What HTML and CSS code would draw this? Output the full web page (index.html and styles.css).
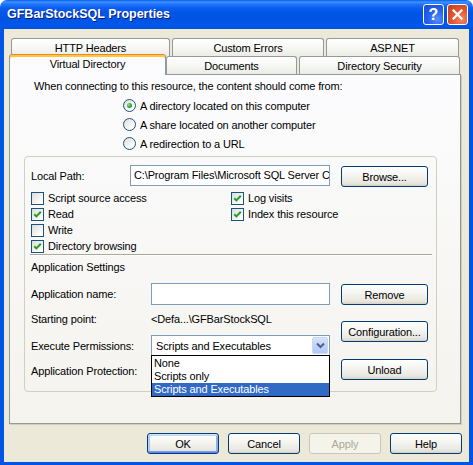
FILE: index.html
```html
<!DOCTYPE html>
<html>
<head>
<meta charset="utf-8">
<title>GFBarStockSQL Properties</title>
<link rel="stylesheet" href="styles.css">
</head>
<body>
<div class="window">
  <div class="titlebar">
    <span class="title">GFBarStockSQL Properties</span>
    <div class="tbtns">
      <span class="tbtn help">?</span>
      <span class="tbtn close"><svg width="11" height="11" viewBox="0 0 11 11"><path d="M1.5 1.5 L9.5 9.5 M9.5 1.5 L1.5 9.5" stroke="#fff" stroke-width="2.2" stroke-linecap="square"/></svg></span>
    </div>
  </div>
  <div class="client">
    <div class="tabs">
      <div class="tabrow row1">
        <div class="tab w-http">HTTP Headers</div>
        <div class="tab w-err">Custom Errors</div>
        <div class="tab w-asp">ASP.NET</div>
      </div>
      <div class="tabrow row2">
        <div class="tab sel w-vd">Virtual Directory</div>
        <div class="tab w-doc">Documents</div>
        <div class="tab w-sec">Directory Security</div>
      </div>
    </div>
    <div class="panel">
      <div class="intro">When connecting to this resource, the content should come from:</div>
      <div class="radios">
        <div class="rrow"><span class="radio on"></span><span>A directory located on this computer</span></div>
        <div class="rrow"><span class="radio"></span><span>A share located on another computer</span></div>
        <div class="rrow"><span class="radio"></span><span>A redirection to a URL</span></div>
      </div>
      <div class="group">
        <div class="pathrow">
          <span class="plabel">Local Path:</span>
          <div class="field pathfield">C:\Program Files\Microsoft SQL Server C</div>
          <div class="btn sidebtn">Browse...</div>
        </div>
        <div class="checks">
          <div class="cb"><span class="box"></span><span>Script source access</span></div>
          <div class="cb"><span class="box"><svg class="tick" viewBox="0 0 11 11"><path d="M2.3 5.2 L4.4 7.4 L8.8 2.8" fill="none" stroke="#21A121" stroke-width="2"/></svg></span><span>Log visits</span></div>
          <div class="cb"><span class="box"><svg class="tick" viewBox="0 0 11 11"><path d="M2.3 5.2 L4.4 7.4 L8.8 2.8" fill="none" stroke="#21A121" stroke-width="2"/></svg></span><span>Read</span></div>
          <div class="cb"><span class="box"><svg class="tick" viewBox="0 0 11 11"><path d="M2.3 5.2 L4.4 7.4 L8.8 2.8" fill="none" stroke="#21A121" stroke-width="2"/></svg></span><span>Index this resource</span></div>
          <div class="cb"><span class="box"></span><span>Write</span></div>
          <div></div>
          <div class="cb"><span class="box"><svg class="tick" viewBox="0 0 11 11"><path d="M2.3 5.2 L4.4 7.4 L8.8 2.8" fill="none" stroke="#21A121" stroke-width="2"/></svg></span><span>Directory browsing</span></div>
          <div></div>
        </div>
        <div class="sep"></div>
        <div class="appsettings">Application Settings</div>
        <div class="app">
          <div class="appleft">
            <div class="ar r1"><span class="alabel">Application name:</span><div class="field appfield"></div></div>
            <div class="ar r2"><span class="alabel">Starting point:</span><span>&lt;Defa...\GFBarStockSQL</span></div>
            <div class="ar r3"><span class="alabel">Execute Permissions:</span>
              <div class="combo">
                <span class="ctext">Scripts and Executables</span>
                <span class="cbtn"><svg width="9" height="7" viewBox="0 0 9 7"><path d="M1 1.5 L4.5 5 L8 1.5" fill="none" stroke="#4D6185" stroke-width="2"/></svg></span>
                <div class="dropdown">
                  <div class="item">None</div>
                  <div class="item">Scripts only</div>
                  <div class="item hi">Scripts and Executables</div>
                </div>
              </div>
            </div>
            <div class="ar r4"><span class="alabel">Application Protection:</span></div>
          </div>
          <div class="bcol">
            <div class="btn sidebtn">Remove</div>
            <div class="btn sidebtn">Configuration...</div>
            <div class="btn sidebtn last">Unload</div>
          </div>
        </div>
      </div>
    </div>
    <div class="footer">
      <div class="btn fbtn def">OK</div>
      <div class="btn fbtn">Cancel</div>
      <div class="btn fbtn dis">Apply</div>
      <div class="btn fbtn">Help</div>
    </div>
  </div>
</div>
</body>
</html>
```
FILE: styles.css
```css
html, body {
  margin: 0;
  padding: 0;
  background: #ffffff;
}
body {
  width: 473px;
  height: 465px;
  overflow: hidden;
  font-family: "Liberation Sans", Arial, sans-serif;
  font-size: 11px;
  letter-spacing: -0.14px;
  color: #000;
}
.window {
  width: 473px;
  height: 465px;
  display: flex;
  flex-direction: column;
}
.titlebar {
  height: 29px;
  flex: none;
  display: flex;
  align-items: flex-start;
  padding: 0 5px 0 7px;
  border-radius: 7px 7px 0 0;
  background: linear-gradient(#0A5BE6 0, #3D93FF 2px, #2476FA 4px, #0A5DF0 8px, #0055E6 45%, #0054E3 70%, #0058EC 88%, #0050DC 100%);
}
.title {
  flex: 1;
  color: #fff;
  font-weight: bold;
  font-size: 12.5px;
  letter-spacing: 0;
  line-height: 29px;
  text-shadow: 1px 1px #0A1A80;
}
.tbtns {
  display: flex;
  gap: 3px;
  margin-top: 4px;
}
.tbtn {
  width: 21px;
  height: 21px;
  box-sizing: border-box;
  border: 1px solid #fff;
  border-radius: 3px;
  display: flex;
  align-items: center;
  justify-content: center;
}
.help {
  background: radial-gradient(circle at 70% 75%, #5B8EF8, #2663EE 45%, #1B4FD8 90%);
  color: #fff;
  font-weight: bold;
  font-size: 16px;
  letter-spacing: 0;
}
.close {
  background: radial-gradient(circle at 70% 75%, #F08566, #E25A34 45%, #C94220 90%);
}
.client {
  flex: 1;
  display: flex;
  flex-direction: column;
  background: #ECE9D8;
  border-style: solid;
  border-color: #0055E5;
  border-width: 0 4px 3px 4px;
  padding-top: 9px;
}
.tabs {
  margin-left: 5px;
  width: 452px;
}
.tabrow {
  display: flex;
  height: 18px;
}
.row1 {
  gap: 2px;
  padding-left: 2px;
}
.tab {
  box-sizing: border-box;
  height: 18px;
  flex: none;
  border: 1px solid #919B9C;
  border-bottom: none;
  border-radius: 3px 3px 0 0;
  background: linear-gradient(#FFFFFF, #F6F6F3 55%, #ECEBE6);
  display: flex;
  align-items: center;
  justify-content: center;
  padding-top: 1px;
}
.tab.sel {
  height: 21px;
  margin-top: -2px;
  position: relative;
  z-index: 1;
  border-top: 1px solid #E68B2C;
  box-shadow: inset 0 2px #FFC73C;
  background: #FCFCFE;
  padding-top: 0;
  padding-bottom: 2px;
}
.w-http { width: 159px; }
.w-err { width: 152px; }
.w-asp { width: 133px; }
.w-vd { width: 157px; }
.w-doc { width: 131px; }
.w-sec { width: 161px; margin-left: 2px; }
.panel {
  box-sizing: border-box;
  width: 452px;
  height: 350px;
  margin-left: 5px;
  border: 1px solid #919B9C;
  border-right-color: #8C9495;
  box-shadow: 1px 1px #D0CEBF;
  background: linear-gradient(#FCFCFE, #F4F3EE);
  padding-top: 4px;
}
.intro {
  margin-left: 24px;
  line-height: 14px;
}
.radios {
  margin: 3px 0 0 113px;
}
.rrow {
  height: 19px;
  display: flex;
  align-items: center;
  gap: 4px;
}
.radio {
  width: 13px;
  height: 13px;
  box-sizing: border-box;
  border: 1px solid #1C5180;
  border-radius: 50%;
  background: linear-gradient(135deg, #DCDCD7, #FFFFFF 80%);
  display: flex;
  align-items: center;
  justify-content: center;
}
.radio.on::after {
  content: "";
  width: 5px;
  height: 5px;
  border-radius: 50%;
  background: radial-gradient(circle at 35% 35%, #8FE38F, #21A121 60%, #1A8A1A);
}
.group {
  box-sizing: border-box;
  width: 413px;
  height: 236px;
  margin: 3px 0 0 14px;
  border: 1px solid #D0D0BF;
  border-radius: 4px;
  padding-top: 8px;
}
.pathrow {
  display: flex;
  align-items: center;
  height: 22px;
  padding-left: 6px;
}
.plabel {
  width: 99px;
  flex: none;
}
.field {
  box-sizing: border-box;
  height: 21px;
  border: 1px solid #7F9DB9;
  background: #fff;
  flex: none;
}
.pathfield {
  width: 200px;
  padding-left: 3px;
  line-height: 19px;
  white-space: nowrap;
  overflow: hidden;
  align-self: flex-start;
}
.btn {
  box-sizing: border-box;
  height: 21px;
  flex: none;
  border: 1px solid #003C74;
  border-radius: 3px;
  background: linear-gradient(#FFFFFF, #F4F4F0 45%, #E8E7DF 85%, #D6D0C5);
  display: flex;
  align-items: center;
  justify-content: center;
  color: #000;
}
.sidebtn {
  width: 87px;
  margin-left: 11px;
}
.pathrow .sidebtn {
  align-self: flex-end;
}
.checks {
  display: grid;
  grid-template-columns: 200px 200px;
  grid-auto-rows: 16px;
  margin: 3px 0 0 6px;
}
.cb {
  display: flex;
  align-items: center;
  gap: 4px;
}
.box {
  width: 13px;
  height: 13px;
  box-sizing: border-box;
  border: 1px solid #1C5180;
  background: linear-gradient(135deg, #DCDCD7, #FFFFFF 85%);
  display: flex;
}
.tick {
  width: 11px;
  height: 11px;
}
.sep {
  margin: 0 4px 0 5px;
  border-top: 1px solid #ACA899;
  border-bottom: 1px solid #FFFFFF;
}
.appsettings {
  margin-top: 4px;
  padding-left: 6px;
  line-height: 14px;
}
.app {
  display: flex;
  margin-top: 9px;
  padding-left: 6px;
}
.appleft {
  width: 299px;
  flex: none;
}
.ar {
  display: flex;
  align-items: center;
}
.r1 { height: 22px; }
.r2 { height: 28px; }
.r3 { height: 25px; }
.r4 { height: 26px; }
.alabel {
  width: 120px;
  flex: none;
}
.appfield {
  width: 179px;
  height: 22px;
}
.combo {
  position: relative;
  box-sizing: border-box;
  width: 179px;
  height: 21px;
  border: 1px solid #7F9DB9;
  background: #fff;
  display: flex;
  align-items: center;
  padding: 0 1px 0 4px;
}
.ctext {
  flex: 1;
  white-space: nowrap;
}
.cbtn {
  width: 16px;
  height: 17px;
  border-radius: 2px;
  background: linear-gradient(#D6E3FE, #C1D3FB 50%, #B4C8F6);
  border: 1px solid #C6D6FC;
  box-sizing: border-box;
  display: flex;
  align-items: center;
  justify-content: center;
}
.dropdown {
  position: absolute;
  top: 100%;
  left: -1px;
  width: 179px;
  box-sizing: border-box;
  border: 1px solid #000;
  background: #fff;
  z-index: 5;
  padding-top: 1px;
}
.item {
  height: 13px;
  line-height: 13px;
  padding-left: 2px;
  white-space: nowrap;
}
.item.hi {
  background: #316AC5;
  color: #fff;
}
.bcol {
  display: flex;
  flex-direction: column;
  gap: 16px;
  padding-top: 1px;
}
.bcol .last {
  margin-top: 1px;
}
.footer {
  display: flex;
  justify-content: flex-end;
  gap: 9px;
  padding: 9px 7px 0 0;
}
.fbtn {
  width: 72px;
}
.def {
  box-shadow: inset 0 1px #CEE7FF, inset 0 -1px #6982EE, inset 1px 0 #B8D2FA, inset -1px 0 #89ADE4, inset 0 2px #BCD4F6, inset 0 -2px #7D99F1, inset 2px 0 #A9C4F3, inset -2px 0 #8FAEEF;
}
.dis {
  border-color: #C9C7BA;
  color: #ACA899;
  background: #F5F4EA;
}
```
